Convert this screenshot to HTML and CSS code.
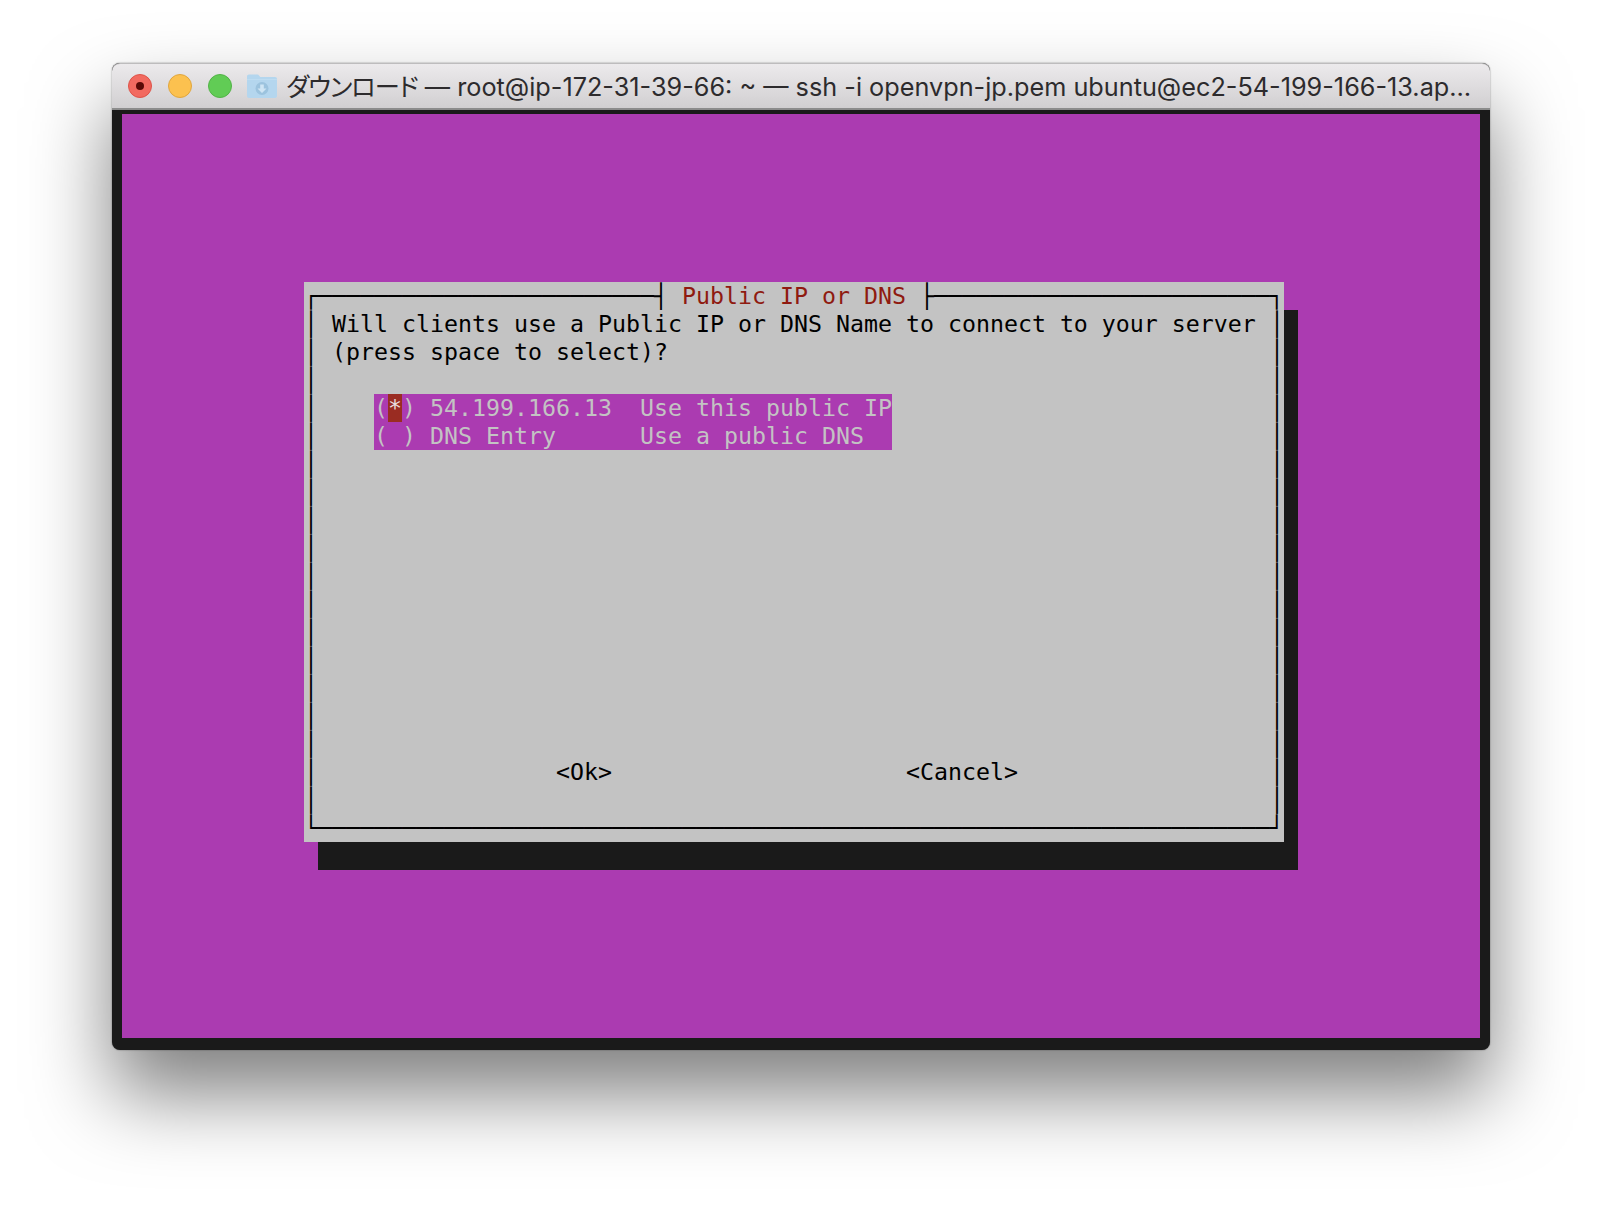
FILE: index.html
```html
<!DOCTYPE html>
<html lang="ja">
<head>
<meta charset="utf-8">
<title>Terminal</title>
<link rel="stylesheet" href="styles.css">
</head>
<body>
<main class="window">
  <header class="titlebar">
    <span class="light light-close"><span class="close-dot"></span></span>
    <span class="light light-min"></span>
    <span class="light light-max"></span>
    <svg class="folder" viewBox="0 0 30 24" width="30" height="24" aria-hidden="true">
      <path d="M0 2.500C0 1.200 .8.500 2 .5h8c1 0 1.500.4 2 1l1.200 1.500H28c1.200 0 2 .8 2 2V22c0 1.200-.8 2-2 2H2c-1.200 0-2-.8-2-2Z" fill="#b4d6ee"/>
      <path d="M0 5.500h30V6H0Z" fill="#c8e2f4"/>
      <circle cx="15" cy="14.500" r="6.500" fill="#9cc3de"/>
      <path d="M13.200 10.500h3.600v4h2.700L15 19l-4.500-4.500h2.700Z" fill="#cfe5f4"/>
    </svg>
    <h1 class="title"><span class="jp">ダウンロード</span> — root@ip-172-31-39-66: ~ — ssh -i openvpn-jp.pem ubuntu@ec2-54-199-166-13.ap…</h1>
  </header>
  <section class="term">
    <div class="dialog">
      <div class="row">┌────────────────────────┤<span class="head"> Public IP or DNS </span>├────────────────────────┐</div>
      <div class="row"><span>│</span><span class="cell"> Will clients use a Public IP or DNS Name to connect to your server</span><span>│</span></div>
      <div class="row"><span>│</span><span class="cell"> (press space to select)?</span><span>│</span></div>
      <div class="row"><span>│</span><span class="cell"></span><span>│</span></div>
      <div class="row"><span>│</span><span class="cell">    <span class="list">(<span class="mark">*</span>) 54.199.166.13  Use this public IP</span></span><span>│</span></div>
      <div class="row"><span>│</span><span class="cell">    <span class="list">( ) DNS Entry      Use a public DNS  </span></span><span>│</span></div>
      <div class="row"><span>│</span><span class="cell"></span><span>│</span></div>
      <div class="row"><span>│</span><span class="cell"></span><span>│</span></div>
      <div class="row"><span>│</span><span class="cell"></span><span>│</span></div>
      <div class="row"><span>│</span><span class="cell"></span><span>│</span></div>
      <div class="row"><span>│</span><span class="cell"></span><span>│</span></div>
      <div class="row"><span>│</span><span class="cell"></span><span>│</span></div>
      <div class="row"><span>│</span><span class="cell"></span><span>│</span></div>
      <div class="row"><span>│</span><span class="cell"></span><span>│</span></div>
      <div class="row"><span>│</span><span class="cell"></span><span>│</span></div>
      <div class="row"><span>│</span><span class="cell"></span><span>│</span></div>
      <div class="row"><span>│</span><span class="cell"></span><span>│</span></div>
      <div class="row"><span>│</span><span class="cell">                 &lt;Ok&gt;                     &lt;Cancel&gt;</span><span>│</span></div>
      <div class="row"><span>│</span><span class="cell"></span><span>│</span></div>
      <div class="row">└────────────────────────────────────────────────────────────────────┘</div>
    </div>
  </section>
</main>
</body>
</html>
```
FILE: styles.css
```css
html, body {
  margin: 0;
  background: #fff;
}
body {
  height: 1210px;
  overflow: hidden;
  padding: 63px 0 0 112px;
  box-sizing: border-box;
}
.window {
  width: 1378px;
  height: 987px;
  display: flex;
  flex-direction: column;
  border-radius: 8px;
  background: #1a1a1a;
  box-shadow: 0 44px 80px rgba(0, 0, 0, .5), 0 0 1.500px rgba(0, 0, 0, .6);
}
.titlebar {
  height: 47px;
  box-sizing: border-box;
  flex: none;
  display: flex;
  align-items: center;
  padding-left: 16px;
  border-radius: 8px 8px 0 0;
  border-top: 1px solid #bdbcbd;
  border-bottom: 2px solid #8c8c8c;
  background: linear-gradient(#eceaec, #d1cfd1);
}
.light {
  flex: none;
  width: 24px;
  height: 24px;
  box-sizing: border-box;
  border-radius: 50%;
  margin-right: 16px;
  display: flex;
  align-items: center;
  justify-content: center;
}
.light-close { background: #f26a60; border: 1px solid #de5349; }
.light-min { background: #fcc14f; border: 1px solid #e0a63e; }
.light-max { background: #61cc55; border: 1px solid #52b347; margin-right: 15px; }
.close-dot {
  width: 8px;
  height: 8px;
  border-radius: 50%;
  background: #5a0a06;
}
.folder { flex: none; margin-right: 9px; }
.title {
  margin: 0 0 3px;
  font: 400 25.26px "Inter", "Noto Sans CJK JP", sans-serif;
  color: #2d2b2d;
  white-space: nowrap;
}
.jp {
  font-feature-settings: "palt";
  letter-spacing: -1px;
}
.term {
  flex: none;
  width: 1358px;
  height: 924px;
  box-sizing: border-box;
  margin: 4px 0 0 10px;
  padding: 168px 0 0 182px;
  background: #ab3bb1;
  font: 23.254px/28px "DejaVu Sans Mono", monospace;
  color: #000;
}
.dialog {
  width: 980px;
  height: 560px;
  background: #c3c3c3;
  box-shadow: 14px 28px 0 #1a1a1a;
}
.row {
  height: 28px;
  display: flex;
  white-space: pre;
}
.cell { flex: 1; }
.head { color: #8f1a10; }
.list {
  display: inline-block;
  height: 28px;
  background: #ab3bb1;
  color: #c3c3c3;
}
.mark {
  display: inline-block;
  height: 28px;
  background: #9a2c22;
  color: #e8dede;
}
```
